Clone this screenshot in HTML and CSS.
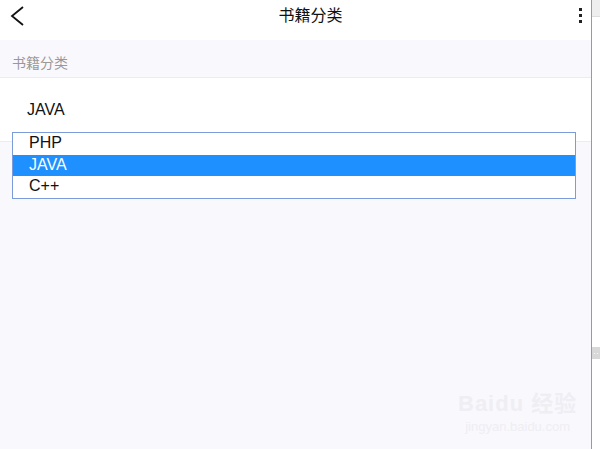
FILE: index.html
```html
<!DOCTYPE html>
<html lang="zh-CN">
<head>
    <meta charset="UTF-8">
    <meta name="viewport" content="width=device-width, initial-scale=1.0">
    <title>书籍分类</title>
    <link rel="stylesheet" href="styles.css">
</head>
<body>
    <div class="page">
        <header class="topbar">
            <svg class="back" width="15" height="20" viewBox="0 0 15 20">
                <polyline points="13,1 2,10 13,19" fill="none" stroke="#111" stroke-width="1.8"/>
            </svg>
            <h1 class="title">书籍分类</h1>
            <div class="more">
                <span></span><span></span><span></span>
            </div>
        </header>

        <div class="section-label">书籍分类</div>

        <div class="picker">
            <div class="picker-value">JAVA</div>
            <ul class="options">
                <li>PHP</li>
                <li class="selected">JAVA</li>
                <li>C++</li>
            </ul>
        </div>

        <div class="watermark">
            <span class="wm-logo">Bai<b>du</b> 经验</span>
            <span class="wm-url">jingyan.baidu.com</span>
        </div>
    </div>
    <div class="side">
        <div class="side-top"></div>
        <div class="side-handle">··</div>
    </div>
</body>
</html>
```

FILE: styles.css
```css
body {
    margin: 0;
    display: flex;
    height: 100vh;
    font-family: "Liberation Sans", "Noto Sans CJK SC", Arial, sans-serif;
    background-color: #fff;
    overflow: hidden;
}

.page {
    width: 591px;
    flex-shrink: 0;
    background-color: #f9f8fd;
    position: relative;
}

.side {
    width: 8px;
    border-left: 1px solid #9a9a9a;
    background-color: #fff;
}

.side-top {
    height: 16px;
    background-color: #eeeeee;
    border-bottom: 1px solid #ddd;
}

.side-handle {
    margin-top: 330px;
    height: 12px;
    background-color: #d8d8d8;
    color: #fff;
    font-size: 9px;
    line-height: 12px;
    text-align: center;
    overflow: hidden;
}

.topbar {
    height: 40px;
    background-color: #fff;
    display: flex;
    align-items: center;
    position: relative;
}

.back {
    position: absolute;
    left: 10px;
    top: 6px;
}

.title {
    margin: 0 auto;
    padding: 0 0 12px 30px;
    font-family: "Noto Sans CJK SC", sans-serif;
    font-size: 16px;
    font-weight: normal;
    color: #111;
}

.more {
    position: absolute;
    right: 9px;
    top: 8px;
    display: flex;
    flex-direction: column;
    gap: 3px;
}

.more span {
    width: 3px;
    height: 3px;
    background-color: #222;
}

.section-label {
    height: 37px;
    padding-left: 12px;
    line-height: 44px;
    font-family: "Noto Sans CJK SC", sans-serif;
    font-size: 14px;
    color: #999;
    border-bottom: 1px solid #ececf0;
}

.picker {
    height: 63px;
    background-color: #fff;
    border-bottom: 1px solid #ececf0;
    position: relative;
}

.picker-value {
    padding: 23px 0 0 27px;
    font-size: 16px;
    color: #111;
}

.options {
    list-style: none;
    margin: 0;
    padding: 0;
    position: absolute;
    left: 12px;
    top: 54px;
    width: 562px;
    border: 1px solid #7c9bd9;
    background-color: #fff;
}

.options li {
    height: 21.7px;
    line-height: 20px;
    padding-left: 16px;
    font-size: 16px;
    color: #111;
}

.options li.selected {
    background-color: #1e90ff;
    color: #fff;
}

.watermark {
    position: absolute;
    left: 458px;
    top: 385px;
    display: flex;
    flex-direction: column;
    align-items: center;
    color: #efeef3;
}

.wm-logo {
    font-size: 22px;
    font-weight: bold;
    letter-spacing: 1px;
}

.wm-url {
    font-size: 13px;
    margin-top: 2px;
}
```
